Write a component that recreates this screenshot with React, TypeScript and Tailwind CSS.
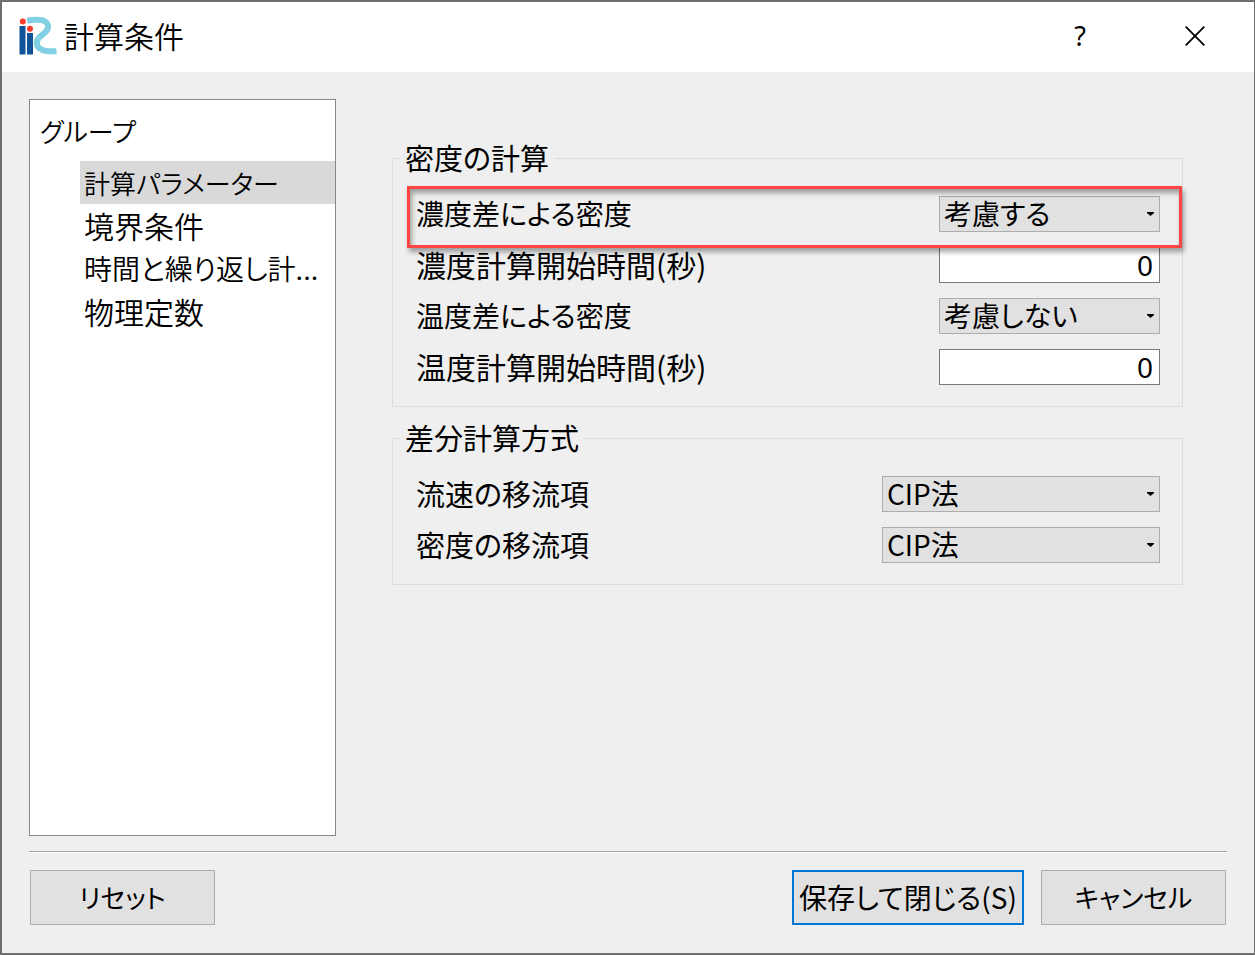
import React, { useState } from "react";

const uiFont = "font-['Noto_Sans_CJK_JP',sans-serif] [font-feature-settings:'palt']";

function Logo() {
  return (
    <svg viewBox="0 0 40 40" className="size-10 shrink-0" aria-hidden="true">
      <path
        d="M9 4.6C15 3.6 20 3.2 24 4.2C30 5.8 31.5 10.5 28.5 15C25.5 19 20 20 18.9 25.5C18 31 22.5 34.3 28.5 35C32 35.400 35 35.400 38.500 35.200"
        fill="none"
        stroke="#82d0e4"
        strokeWidth="6"
      />
      <path d="M1.500 10h6v28.500h-6zM9 17h6v21.500H9z" fill="#0f5499" />
      <circle cx="4.800" cy="5.600" r="3" fill="#fb3b2b" />
      <circle cx="12" cy="12.800" r="3" fill="#fb3b2b" />
    </svg>
  );
}

type SelectRowProps = { id: string; label: string; options: string[]; wide?: boolean };

function SelectRow({ id, label, options, wide }: SelectRowProps) {
  return (
    <>
      <label htmlFor={id} className={`whitespace-nowrap leading-[34px] ${wide ? "text-[29px]" : "text-[28px]"}`}>
        {label}
      </label>
      <div className={`relative ${wide ? "w-[278px]" : "w-[221px]"}`}>
        <select
          id={id}
          className="block h-9 w-full appearance-none border border-[#adadad] bg-[#e1e1e1] pb-[2px] pl-1 pr-6 leading-8 outline-none"
        >
          {options.map((o) => (
            <option key={o}>{o}</option>
          ))}
        </select>
        <svg viewBox="0 0 7 4" className="pointer-events-none absolute right-[6px] top-4 h-1 w-[7px]" aria-hidden="true">
          <path d="M0 0h7v1L3.500 4L0 1z" fill="#000" />
        </svg>
      </div>
    </>
  );
}

function NumberRow({ id, label }: { id: string; label: string }) {
  return (
    <div className="flex h-9 items-start justify-between">
      <label htmlFor={id} className="whitespace-nowrap text-[30px] leading-[34px]">
        {label}
      </label>
      <input
        id={id}
        type="text"
        inputMode="numeric"
        defaultValue="0"
        className="h-9 w-[221px] border border-[#7a7a7a] bg-white pr-[6px] text-right font-['Noto_Sans',sans-serif] text-[28px] outline-none"
      />
    </div>
  );
}

function Group({ title, children }: { title: string; children: React.ReactNode }) {
  return (
    <fieldset className="min-w-0 border border-[#dcdcdc] pb-[21px] pl-[7px] pr-[22px]">
      <legend className="h-[30px] px-[5px] text-[29px] leading-[28px]">{title}</legend>
      <div className="flex flex-col gap-[15px] pl-4 pt-[23px]">{children}</div>
    </fieldset>
  );
}

const pages = [
  { name: "計算パラメーター", size: "text-[26px]" },
  { name: "境界条件", size: "text-[30px]" },
  { name: "時間と繰り返し計...", size: "text-[28px]" },
  { name: "物理定数", size: "text-[30px]" },
];

export default function App() {
  const [page, setPage] = useState(0);
  return (
    <div
      className={`flex min-h-screen flex-col border-2 border-r border-[#6f6f6f] bg-[#efefef] text-[28px] text-black ${uiFont}`}
    >
      <header className="flex h-[70px] items-center bg-white pb-[2px] pl-4 pr-[47px]">
        <Logo />
        <h1 className="flex-1 pb-[2px] pl-[6px] text-[30px] font-[350] leading-9">計算条件</h1>
        <button
          type="button"
          aria-label="ヘルプ"
          className="w-6 text-center font-['Noto_Sans',sans-serif] text-[27px] leading-10"
        >
          ?
        </button>
        <button type="button" aria-label="閉じる" className="ml-[91px] flex size-6 items-center justify-center">
          <svg viewBox="0 0 20 20" className="size-5" aria-hidden="true">
            <path d="M0.700 0.700L19.300 19.300M19.300 0.700L0.700 19.300" stroke="#000" strokeWidth="1.800" />
          </svg>
        </button>
      </header>

      <main className="flex flex-1 pl-[27px] pr-[71px] pt-[27px]">
        <nav className="w-[307px] shrink-0 border border-[#828790] bg-white font-[350]">
          <h2 className="pl-[10px] text-[26px] leading-[61px]">グループ</h2>
          <ul className="pl-[50px]">
            {pages.map(({ name, size }, i) => (
              <li key={name}>
                <button
                  type="button"
                  onClick={() => setPage(i)}
                  className={`block w-full whitespace-nowrap pl-1 text-left leading-[43px] ${size} ${
                    page === i ? "bg-[#d9d9d9]" : ""
                  }`}
                >
                  {name}
                </button>
              </li>
            ))}
          </ul>
        </nav>

        <div className="ml-14 flex flex-1 flex-col gap-4 pt-11">
          <Group title="密度の計算">
            <div className="relative z-10 flex items-start justify-between">
              <SelectRow id="conc" label="濃度差による密度" options={["考慮する", "考慮しない"]} />
              <div className="pointer-events-none absolute -bottom-4 -left-[9px] -right-[22px] -top-[10px] border-3 border-[#ff4444] shadow-[2px_4px_5px_rgba(0,0,0,0.35),inset_2px_4px_5px_rgba(0,0,0,0.35)]" />
            </div>
            <NumberRow id="conc-start" label="濃度計算開始時間(秒)" />
            <div className="flex items-start justify-between">
              <SelectRow id="temp" label="温度差による密度" options={["考慮しない", "考慮する"]} />
            </div>
            <NumberRow id="temp-start" label="温度計算開始時間(秒)" />
          </Group>

          <Group title="差分計算方式">
            <div className="flex items-start justify-between">
              <SelectRow id="velocity" label="流速の移流項" options={["CIP法"]} wide />
            </div>
            <div className="flex items-start justify-between">
              <SelectRow id="density" label="密度の移流項" options={["CIP法"]} wide />
            </div>
          </Group>
        </div>
      </main>

      <footer className="px-[27px] pb-7 pt-[15px]">
        <div className="border-t border-[#a0a0a0]">
          <div className="flex items-center border-t border-white px-px pt-[17px] text-[26px]">
            <button type="button" className="h-[55px] w-[185px] border border-[#adadad] bg-[#e1e1e1] pb-[2px]">
              リセット
            </button>
            <button
              type="button"
              className="ml-auto h-[55px] w-[232px] whitespace-nowrap border-2 border-[#0078d7] bg-[#e1e1e1] pb-[2px] text-[28px]"
            >
              保存して閉じる(S)
            </button>
            <button type="button" className="ml-[17px] h-[55px] w-[185px] border border-[#adadad] bg-[#e1e1e1] pb-[2px]">
              キャンセル
            </button>
          </div>
        </div>
      </footer>
    </div>
  );
}
